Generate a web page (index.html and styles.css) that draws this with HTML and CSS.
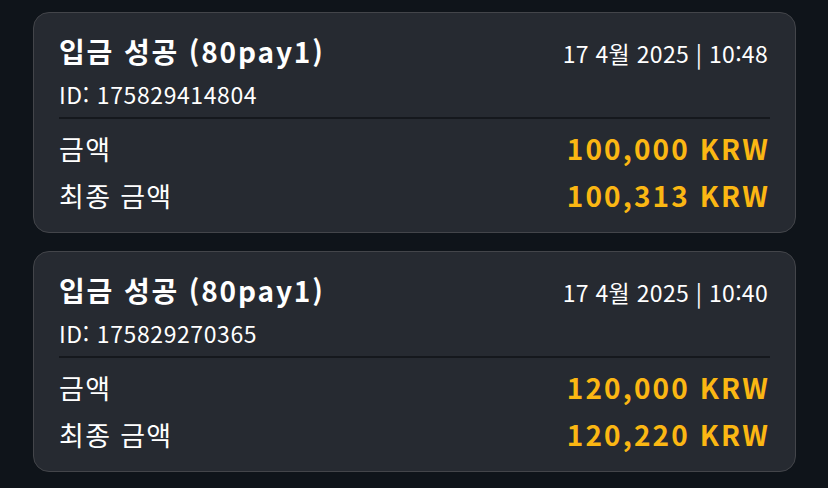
FILE: index.html
```html
<!DOCTYPE html>
<html lang="ko">
<head>
<meta charset="utf-8">
<link rel="stylesheet" href="styles.css">
</head>
<body>
<div class="list">
  <div class="card">
    <div class="head">
      <div class="title">입금 성공 (80pay1)</div>
      <div class="date">17 4월 2025 | 10:48</div>
    </div>
    <div class="id">ID: 175829414804</div>
    <div class="divider"></div>
    <div class="row"><span class="label">금액</span><span class="amount">100,000 KRW</span></div>
    <div class="row"><span class="label">최종 금액</span><span class="amount">100,313 KRW</span></div>
  </div>
  <div class="card">
    <div class="head">
      <div class="title">입금 성공 (80pay1)</div>
      <div class="date">17 4월 2025 | 10:40</div>
    </div>
    <div class="id">ID: 175829270365</div>
    <div class="divider"></div>
    <div class="row"><span class="label">금액</span><span class="amount">120,000 KRW</span></div>
    <div class="row"><span class="label">최종 금액</span><span class="amount">120,220 KRW</span></div>
  </div>
</div>
</body>
</html>
```

FILE: styles.css
```css
html, body {
  margin: 0;
  padding: 0;
  background: #0f141a;
}
body {
  font-family: "Noto Sans CJK KR", "Noto Sans", sans-serif;
  color: #ffffff;
}
.list {
  display: flex;
  flex-direction: column;
  gap: 18px;
  padding: 12px 32px 0 33px;
}
.card {
  background: #262a31;
  border: 1px solid #43454a;
  border-radius: 16px;
  padding: 20px 25px 13px 25px;
}
.head {
  display: flex;
  justify-content: space-between;
  align-items: baseline;
}
.title {
  font-size: 28px;
  font-weight: 700;
  line-height: 36px;
  letter-spacing: 1.85px;
}
.date {
  font-size: 23px;
  line-height: 36px;
  letter-spacing: 0.3px;
  margin-right: 2px;
}
.id {
  font-size: 23px;
  line-height: 38px;
  margin-top: 4px;
  letter-spacing: 0.6px;
}
.divider {
  height: 2px;
  background: #15181d;
  margin-top: 4px;
  margin-bottom: 6px;
}
.row {
  display: flex;
  justify-content: space-between;
  align-items: baseline;
  line-height: 47px;
}
.label {
  font-size: 27px;
  letter-spacing: 1.3px;
}
.amount {
  font-size: 28px;
  font-weight: 700;
  color: #fbb713;
  letter-spacing: 2.1px;
}
```
